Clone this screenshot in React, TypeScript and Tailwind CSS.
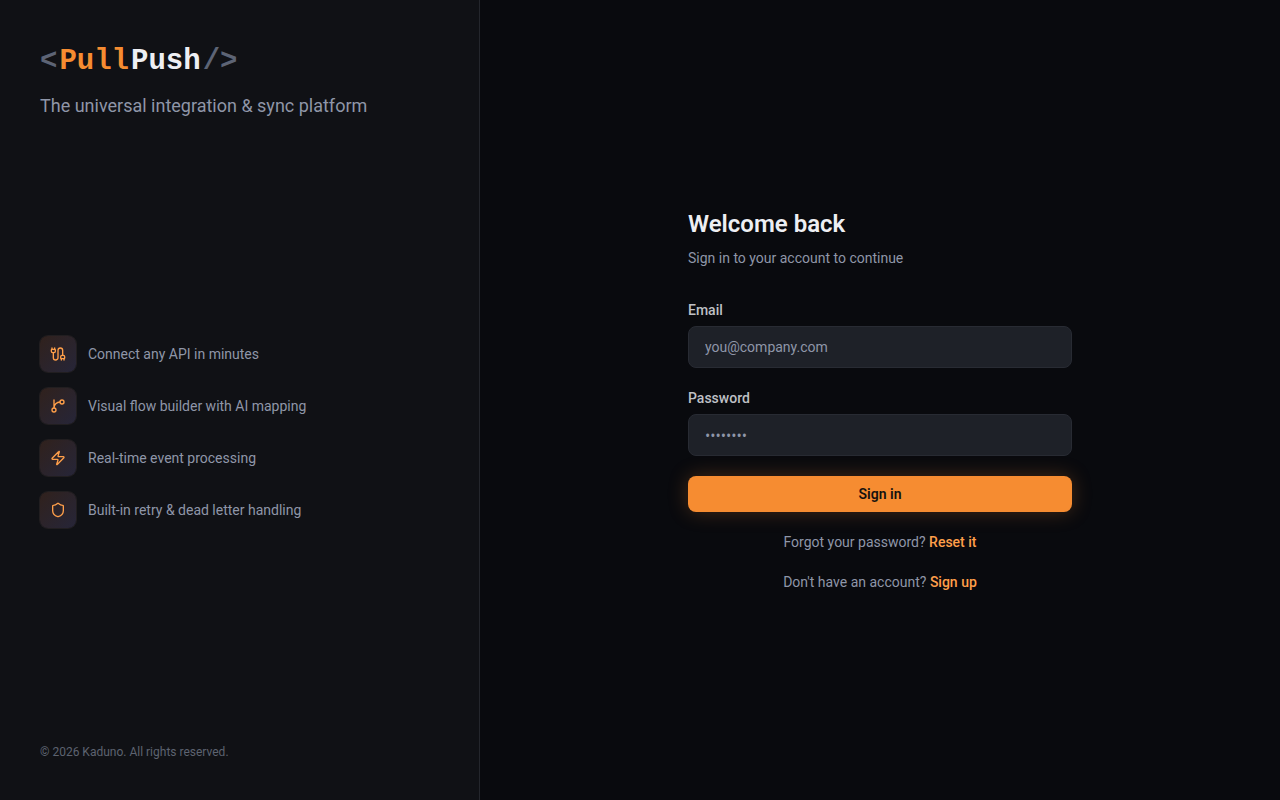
import type { ComponentType } from "react";
import { Cable, Shield, Zap } from "lucide-react";

function BranchIcon({ className }: { className?: string }) {
  return (
    <svg
      className={className}
      viewBox="0 0 24 24"
      fill="none"
      stroke="currentColor"
      strokeWidth="2"
      strokeLinecap="round"
      strokeLinejoin="round"
      aria-hidden="true"
    >
      <path d="M15 6a9 9 0 0 0-9 9V3" />
      <circle cx="18" cy="6" r="3" />
      <circle cx="6" cy="18" r="3" />
    </svg>
  );
}

const features: { icon: ComponentType<{ className?: string }>; text: string }[] = [
  { icon: Cable, text: "Connect any API in minutes" },
  { icon: BranchIcon, text: "Visual flow builder with AI mapping" },
  { icon: Zap, text: "Real-time event processing" },
  { icon: Shield, text: "Built-in retry & dead letter handling" },
];

function Logo() {
  return (
    <h1 className="flex gap-0.5 font-['Liberation_Mono',monospace] text-[29px] leading-11 font-bold">
      <span className="text-[#5d6475]">&lt;</span>
      <span className="text-[#f68c31]">Pull</span>
      <span className="text-[#eeeff3]">Push</span>
      <span className="text-[#5d6475]">/&gt;</span>
    </h1>
  );
}

function BrandPanel() {
  return (
    <aside className="flex w-[480px] shrink-0 flex-col justify-between border-r border-[#24262c] bg-[#101115] p-10">
      <div>
        <Logo />
        <p className="mt-2 text-lg leading-7 text-[#8f96a8]">The universal integration &amp; sync platform</p>
      </div>
      <ul className="space-y-4">
        {features.map(({ icon: Icon, text }) => (
          <li key={text} className="flex items-center gap-3 text-sm text-[#8f96a8]">
            <span className="flex size-9 items-center justify-center rounded-lg bg-linear-to-br from-[#30211c] to-[#262538] ring-1 ring-[#211e20]">
              <Icon className="size-4 text-[#ff9f4a]" />
            </span>
            {text}
          </li>
        ))}
      </ul>
      <p className="text-xs text-[#5d6370]">© 2026 Kaduno. All rights reserved.</p>
    </aside>
  );
}

type FieldProps = { id: string; label: string; type: string; placeholder: string };

function Field({ id, label, type, placeholder }: FieldProps) {
  return (
    <div className="space-y-1.5">
      <label htmlFor={id} className="block text-sm font-medium text-[#bfc0c5]">
        {label}
      </label>
      <input
        id={id}
        type={type}
        placeholder={placeholder}
        className="block h-[42px] w-full rounded-lg border border-[#282b33] bg-[#1e2128] px-4 text-sm text-[#eeeff3] outline-none placeholder:text-[#8f96a8] focus:border-[#f68c31] [&[type=password]]:font-['Open_Sans',sans-serif]"
      />
    </div>
  );
}

function SignInForm() {
  return (
    <div className="w-full max-w-sm">
      <h2 className="text-2xl font-semibold text-[#eeeff3]">Welcome back</h2>
      <p className="mt-2 text-sm text-[#8f96a8]">Sign in to your account to continue</p>
      <form className="mt-8 space-y-5" onSubmit={(event) => event.preventDefault()}>
        <Field id="email" label="Email" type="email" placeholder="you@company.com" />
        <Field id="password" label="Password" type="password" placeholder="••••••••" />
        <button
          type="submit"
          className="block h-9 w-full rounded-lg bg-[#f68c31] text-sm font-semibold text-[#15120f] shadow-[0_0_20px_rgba(246,140,49,0.25)]"
        >
          Sign in
        </button>
      </form>
      <p className="mt-5 text-center text-sm text-[#8f96a8]">
        Forgot your password?{" "}
        <a href="#reset" className="font-medium text-[#ff9f4a]">
          Reset it
        </a>
      </p>
      <p className="mt-5 text-center text-sm text-[#8f96a8]">
        Don't have an account?{" "}
        <a href="#signup" className="font-medium text-[#ff9f4a]">
          Sign up
        </a>
      </p>
    </div>
  );
}

export default function App() {
  return (
    <div className="flex min-h-screen bg-[#090a0e] font-[Roboto,sans-serif]">
      <BrandPanel />
      <main className="flex flex-1 items-center justify-center p-8">
        <SignInForm />
      </main>
    </div>
  );
}
